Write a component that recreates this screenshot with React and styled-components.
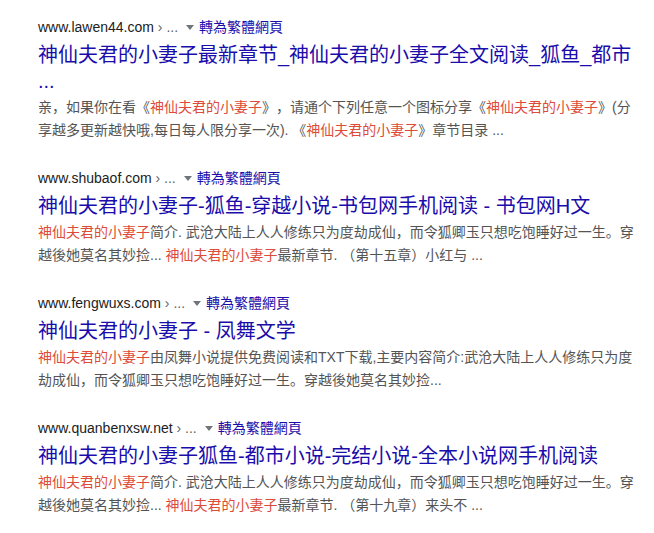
import React from 'react';
import styled, { createGlobalStyle } from 'styled-components';

const GlobalStyle = createGlobalStyle`
  body {
    margin: 0;
    background: #fff;
    font-family: "Liberation Sans", Arial, "Noto Sans CJK SC", sans-serif;
    text-spacing-trim: space-all;
  }
`;

const Page = styled.div`
  padding: 16px 0 0 38px;
`;

const Result = styled.div`
  width: 600px;
  margin-bottom: 25px;
`;

const UrlRow = styled.div`
  display: flex;
  align-items: center;
  height: 22px;
  font-size: 14px;
  line-height: 22px;
  white-space: nowrap;
`;

const Cite = styled.cite`
  font-style: normal;
  color: #202124;
`;

const Crumb = styled.span`
  color: #5f6368;
`;

const Arrow = styled.span`
  width: 0;
  height: 0;
  margin: 1px 5px 0 8px;
  border-left: 4px solid transparent;
  border-right: 4px solid transparent;
  border-top: 5px solid #70757a;
`;

const Translate = styled.a`
  color: #1a0dab;
  text-decoration: none;
  font-size: 14px;
`;

const Title = styled.h3`
  margin: 4px 0 0;
  font-size: 20px;
  line-height: 26px;
  font-weight: normal;
  color: #1a0dab;
`;

const Snippet = styled.div`
  margin-top: 2px;
  font-size: 14px;
  line-height: 23px;
  color: #545454;
`;

const Em = styled.em`
  font-style: normal;
  color: #dd4b39;
`;

const K = '神仙夫君的小妻子';

const results = [
  {
    site: 'www.lawen44.com',
    title: '神仙夫君的小妻子最新章节_神仙夫君的小妻子全文阅读_狐鱼_都市 ...',
    snippet: ['亲，如果你在看《', K, '》，请通个下列任意一个图标分享《', K, '》(分享越多更新越快哦,每日每人限分享一次). 《', K, '》章节目录 ...'],
  },
  {
    site: 'www.shubaof.com',
    title: '神仙夫君的小妻子-狐鱼-穿越小说-书包网手机阅读 - 书包网H文',
    snippet: ['', K, '简介. 武沧大陆上人人修练只为度劫成仙，而令狐卿玉只想吃饱睡好过一生。穿越後她莫名其妙捡... ', K, '最新章节. （第十五章）小红与 ...'],
  },
  {
    site: 'www.fengwuxs.com',
    title: '神仙夫君的小妻子 - 凤舞文学',
    snippet: ['', K, '由凤舞小说提供免费阅读和TXT下载,主要内容简介:武沧大陆上人人修练只为度劫成仙，而令狐卿玉只想吃饱睡好过一生。穿越後她莫名其妙捡...'],
  },
  {
    site: 'www.quanbenxsw.net',
    title: '神仙夫君的小妻子狐鱼-都市小说-完结小说-全本小说网手机阅读',
    snippet: ['', K, '简介. 武沧大陆上人人修练只为度劫成仙，而令狐卿玉只想吃饱睡好过一生。穿越後她莫名其妙捡... ', K, '最新章节. （第十九章）来头不 ...'],
  },
];

export default function App() {
  return (
    <Page>
      <GlobalStyle />
      {results.map((r) => (
        <Result key={r.site}>
          <UrlRow>
            <Cite>{r.site}</Cite>
            <Crumb>&nbsp;› ...</Crumb>
            <Arrow />
            <Translate href="#">轉為繁體網頁</Translate>
          </UrlRow>
          <Title>{r.title}</Title>
          <Snippet>
            {r.snippet.map((part, i) =>
              i % 2 === 1 ? <Em key={i}>{part}</Em> : <span key={i}>{part}</span>
            )}
          </Snippet>
        </Result>
      ))}
    </Page>
  );
}
